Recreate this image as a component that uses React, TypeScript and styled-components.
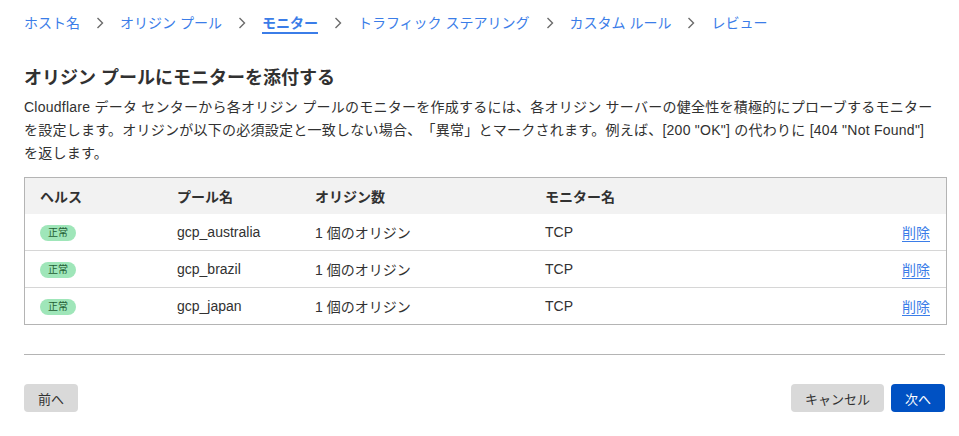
import React from 'react';
import styled, { createGlobalStyle } from 'styled-components';

const GlobalStyle = createGlobalStyle`
  body {
    margin: 0;
    background: #fff;
    font-family: "Liberation Sans", "Noto Sans CJK JP", sans-serif;
    color: #313131;
  }
`;

const Page = styled.div`
  padding: 12px 14px 0 24px;
  display: flex;
  flex-direction: column;
`;

const Crumbs = styled.nav`
  display: flex;
  align-items: center;
  gap: 15px;
  height: 22px;
  font-size: 14px;
`;

const Crumb = styled.a<{ $active?: boolean }>`
  color: #3b7de8;
  text-decoration: none;
  font-weight: ${p => (p.$active ? 700 : 400)};
  border-bottom: ${p => (p.$active ? '2px solid #3b7de8' : '2px solid transparent')};
  padding-top: 2px;
  line-height: 18px;
`;

const Chevron = () => (
  <svg width="10" height="14" viewBox="0 0 10 14" fill="none">
    <path d="M2.5 2 L7.5 7 L2.5 12" stroke="#6b6b6b" strokeWidth="1.4" />
  </svg>
);

const Title = styled.h1`
  margin: 32px 0 0;
  font-size: 18px;
  line-height: 24px;
  font-weight: 700;
  color: #313131;
`;

const Desc = styled.p`
  margin: 6px 0 0;
  font-size: 14px;
  line-height: 23px;
  letter-spacing: 0.25px;
  text-spacing-trim: space-all;
  color: #313131;
  max-width: 915px;
`;

const TableBox = styled.div`
  margin-top: 12px;
  width: 921px;
  border: 1px solid #b4b4b4;
`;

const Grid = styled.div<{ $head?: boolean }>`
  display: grid;
  grid-template-columns: 137px 138px 230px 1fr auto;
  align-items: center;
  padding: 0 16px 0 15px;
  height: 36px;
  background: ${p => (p.$head ? '#f2f2f2' : '#fff')};
  font-size: 14px;
  font-weight: ${p => (p.$head ? 700 : 400)};
  border-top: ${p => (p.$head ? 'none' : '1px solid #d6d6d6')};
  &:nth-child(2) {
    border-top: none;
  }
`;

const Badge = styled.span`
  display: inline-block;
  width: 36px;
  height: 16px;
  line-height: 16px;
  border-radius: 8px;
  background: #9fe6b9;
  color: #1f5e34;
  font-size: 10px;
  text-align: center;
`;

const DeleteLink = styled.a`
  color: #3b7de8;
  text-decoration: underline;
  text-underline-offset: 3px;
  font-size: 14px;
  cursor: pointer;
`;

const Divider = styled.hr`
  margin: 29px 0 0;
  width: 921px;
  border: none;
  border-top: 1px solid #b4b4b4;
`;

const Footer = styled.div`
  width: 921px;
  margin-top: 29px;
  display: flex;
  justify-content: space-between;
`;

const Actions = styled.div`
  display: flex;
  gap: 7px;
`;

const Button = styled.button<{ $primary?: boolean }>`
  height: 28px;
  padding: 0 14px;
  border: none;
  border-radius: 4px;
  font-family: inherit;
  font-size: 13px;
  background: ${p => (p.$primary ? '#0051c3' : '#d9d9d9')};
  color: ${p => (p.$primary ? '#fff' : '#313131')};
  cursor: pointer;
`;

const steps = ['ホスト名', 'オリジン プール', 'モニター', 'トラフィック ステアリング', 'カスタム ルール', 'レビュー'];

const pools = ['gcp_australia', 'gcp_brazil', 'gcp_japan'];

export default function App() {
  return (
    <Page>
      <GlobalStyle />
      <Crumbs>
        {steps.map((s, i) => (
          <React.Fragment key={s}>
            {i > 0 && <Chevron />}
            <Crumb $active={s === 'モニター'}>{s}</Crumb>
          </React.Fragment>
        ))}
      </Crumbs>
      <Title>オリジン プールにモニターを添付する</Title>
      <Desc>
        Cloudflare データ センターから各オリジン プールのモニターを作成するには、各オリジン サーバーの健全性を積極的にプローブするモニターを設定します。オリジンが以下の必須設定と一致しない場合、「異常」とマークされます。例えば、[200 "OK"] の代わりに [404 "Not Found"] を返します。
      </Desc>
      <TableBox>
        <Grid $head>
          <span>ヘルス</span>
          <span>プール名</span>
          <span>オリジン数</span>
          <span>モニター名</span>
          <span />
        </Grid>
        {pools.map(p => (
          <Grid key={p}>
            <span>
              <Badge>正常</Badge>
            </span>
            <span>{p}</span>
            <span>1 個のオリジン</span>
            <span>TCP</span>
            <DeleteLink>削除</DeleteLink>
          </Grid>
        ))}
      </TableBox>
      <Divider />
      <Footer>
        <Button>前へ</Button>
        <Actions>
          <Button>キャンセル</Button>
          <Button $primary>次へ</Button>
        </Actions>
      </Footer>
    </Page>
  );
}
